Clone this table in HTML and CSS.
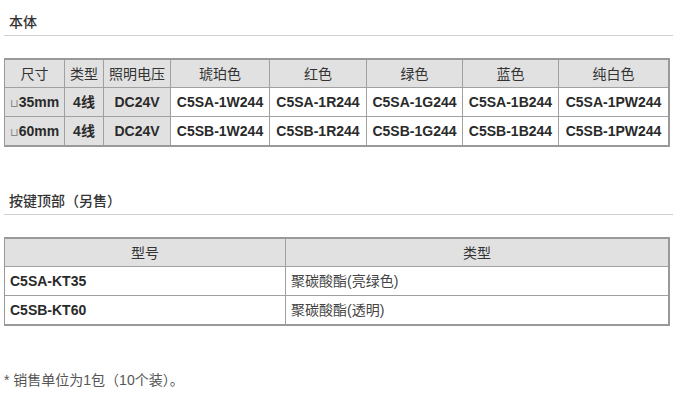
FILE: index.html
```html
<!DOCTYPE html>
<html lang="zh-CN">
<head>
<meta charset="utf-8">
<link rel="stylesheet" href="styles.css">
</head>
<body>
<div class="page">
  <section class="section">
    <h3 class="sec-title">本体</h3>
    <table class="spec spec-main">
      <colgroup>
        <col style="width:60px"><col style="width:39px"><col style="width:67px"><col style="width:99px"><col style="width:97px"><col style="width:96px"><col style="width:96px"><col style="width:109px">
      </colgroup>
      <thead>
        <tr><th><div class="c">尺寸</div></th><th><div class="c">类型</div></th><th><div class="c">照明电压</div></th><th><div class="c">琥珀色</div></th><th><div class="c">红色</div></th><th><div class="c">绿色</div></th><th><div class="c">蓝色</div></th><th><div class="c">纯白色</div></th></tr>
      </thead>
      <tbody>
        <tr><td class="key"><div class="c"><span class="sq">⊔</span>35mm</div></td><td class="key"><div class="c">4线</div></td><td class="key"><div class="c">DC24V</div></td><td><div class="c">C5SA-1W244</div></td><td><div class="c">C5SA-1R244</div></td><td><div class="c">C5SA-1G244</div></td><td><div class="c">C5SA-1B244</div></td><td><div class="c">C5SA-1PW244</div></td></tr>
        <tr><td class="key"><div class="c"><span class="sq">⊔</span>60mm</div></td><td class="key"><div class="c">4线</div></td><td class="key"><div class="c">DC24V</div></td><td><div class="c">C5SB-1W244</div></td><td><div class="c">C5SB-1R244</div></td><td><div class="c">C5SB-1G244</div></td><td><div class="c">C5SB-1B244</div></td><td><div class="c">C5SB-1PW244</div></td></tr>
      </tbody>
    </table>
  </section>
  <section class="section">
    <h3 class="sec-title">按键顶部（另售）</h3>
    <table class="spec spec-sub">
      <colgroup><col style="width:281px"><col style="width:382px"></colgroup>
      <thead>
        <tr><th><div class="c">型号</div></th><th><div class="c">类型</div></th></tr>
      </thead>
      <tbody>
        <tr><td class="model"><div class="c">C5SA-KT35</div></td><td class="desc"><div class="c">聚碳酸酯(亮绿色)</div></td></tr>
        <tr><td class="model"><div class="c">C5SB-KT60</div></td><td class="desc"><div class="c">聚碳酸酯(透明)</div></td></tr>
      </tbody>
    </table>
  </section>
  <p class="note">* 销售单位为1包（10个装）。</p>
</div>
</body>
</html>
```
FILE: styles.css
```css
html, body {
  margin: 0;
  padding: 0;
  background: #fff;
}
body {
  font-family: "Liberation Sans", Arial, "Noto Sans CJK SC", sans-serif;
  font-size: 14px;
  color: #333;
  overflow: hidden;
}
.page {
  padding-left: 4px;
}
.section + .section {
  margin-top: 32px;
}
.sec-title {
  margin: 0;
  padding: 10px 0 3px 5px;
  height: 22px;
  line-height: 22px;
  font-family: "Noto Sans CJK SC", sans-serif;
  font-size: 14px;
  font-weight: 500;
  color: #333;
  border-bottom: 1px solid #cfcfcf;
  overflow: hidden;
}
.spec {
  margin-top: 22px;
  border-collapse: separate;
  border-spacing: 0;
  table-layout: fixed;
  width: 664px;
  border-top: 2px solid #999;
  border-right: 2px solid #999;
  border-bottom: 2px solid #999;
  border-left: 1px solid #999;
}
.spec th, .spec td {
  border: 0;
  border-right: 1px solid #a0a0a0;
  border-bottom: 1px solid #a0a0a0;
  padding: 4px 0;
  text-align: center;
  white-space: nowrap;
  vertical-align: middle;
}
.spec th:last-child, .spec td:last-child {
  border-right: 0;
}
.spec tbody tr:last-child td {
  border-bottom: 0;
}
.spec th {
  padding: 4px 0 3px;
  background: #e1e1e1;
  font-weight: normal;
  color: #333;
}
.c {
  height: 20px;
  line-height: 20px;
  overflow: visible;
}
.spec-main td {
  font-weight: bold;
  color: #2a2a2a;
}
.spec-main td.key {
  background: #e1e1e1;
}
.sq {
  font-size: 11px;
  color: #888;
  font-weight: normal;
}
.spec-sub td {
  text-align: left;
  padding-left: 5px;
}
.spec-sub td.model {
  font-weight: bold;
  color: #2a2a2a;
}
.spec-sub td.desc {
  color: #444;
}
.note {
  margin: 44px 0 0 0;
  height: 20px;
  line-height: 20px;
  font-size: 14px;
  color: #555;
}
```
